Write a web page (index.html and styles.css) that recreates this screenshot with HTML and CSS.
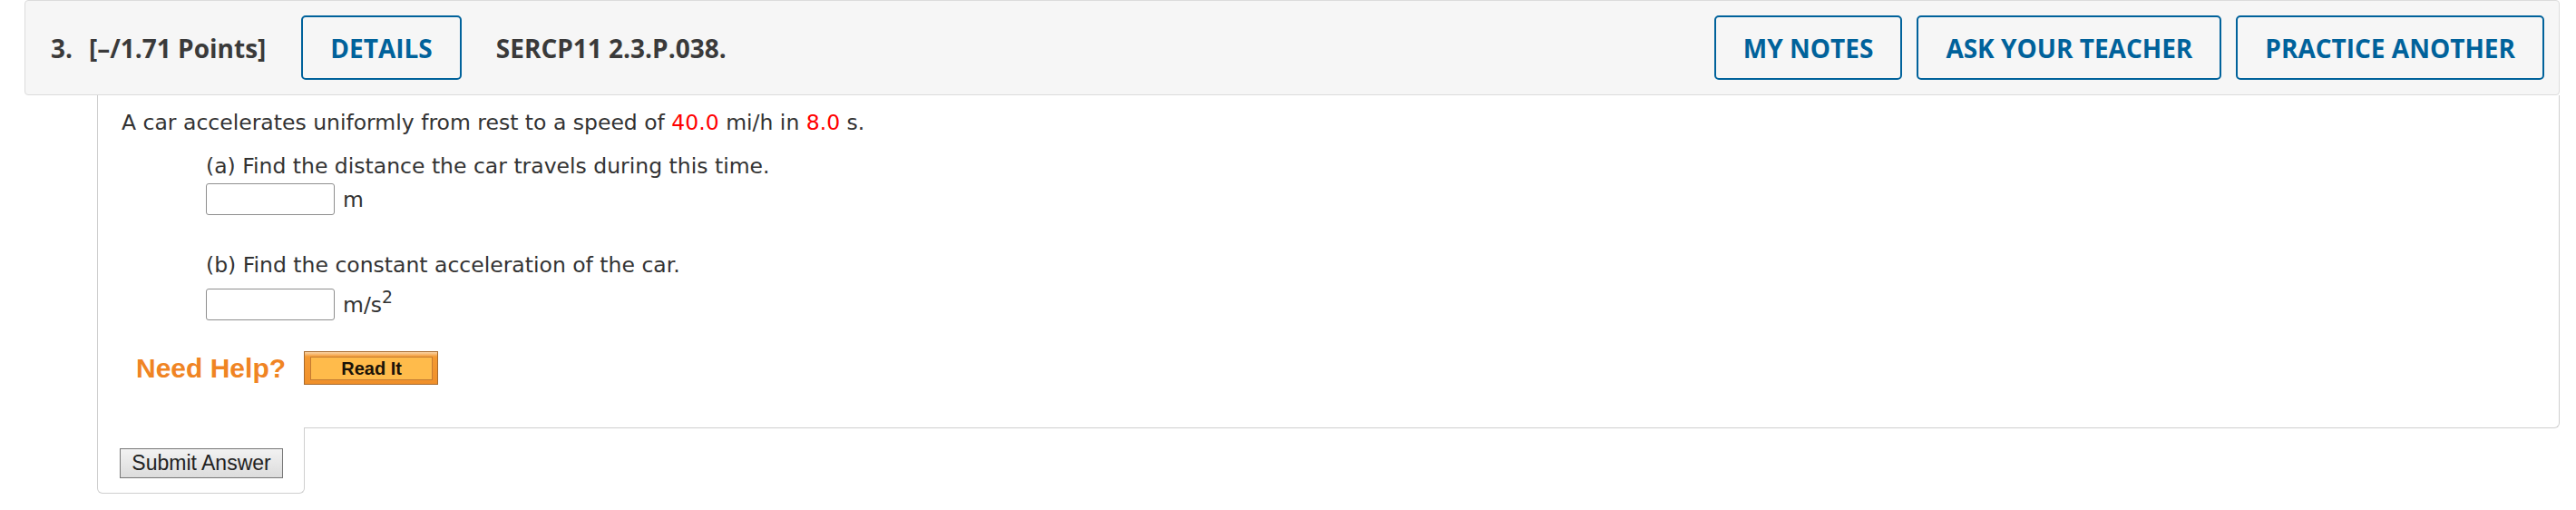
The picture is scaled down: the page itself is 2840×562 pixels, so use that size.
FILE: index.html
```html
<!DOCTYPE html>
<html lang="en">
<head>
<meta charset="utf-8">
<title>Question 3</title>
<link rel="stylesheet" href="styles.css">
</head>
<body>
<div class="question">
  <div class="qhead">
    <div class="qhead-left">
      <span class="qnum">3.</span>
      <span class="qpoints">[–/1.71 Points]</span>
      <button class="hbtn" type="button">DETAILS</button>
      <span class="qcode">SERCP11 2.3.P.038.</span>
    </div>
    <div class="qhead-right">
      <button class="hbtn" type="button">MY NOTES</button>
      <button class="hbtn" type="button">ASK YOUR TEACHER</button>
      <button class="hbtn" type="button">PRACTICE ANOTHER</button>
    </div>
  </div>
  <div class="qbody">
    <p class="stem">A car accelerates uniformly from rest to a speed of <span class="val">40.0</span> mi/h in <span class="val">8.0</span> s.</p>
    <div class="part part-a">
      <p class="prompt">(a) Find the distance the car travels during this time.</p>
      <div class="answer"><input class="ans" type="text"><span class="unit">m</span></div>
    </div>
    <div class="part part-b">
      <p class="prompt">(b) Find the constant acceleration of the car.</p>
      <div class="answer"><input class="ans" type="text"><span class="unit">m/s<sup>2</sup></span></div>
    </div>
    <div class="help">
      <span class="need">Need Help?</span>
      <span class="readit"><span class="readit-inner">Read It</span></span>
    </div>
  </div>
  <div class="qsubmit">
    <button class="submit" type="button">Submit Answer</button>
  </div>
</div>
</body>
</html>
```

FILE: styles.css
```css
html, body {
  margin: 0;
  padding: 0;
  background: #ffffff;
}

.question {
  margin-left: 27px;
  width: 2795px;
}

.qhead {
  box-sizing: border-box;
  height: 105px;
  background: #f6f6f6;
  border: 1px solid #dcdcdc;
  border-radius: 4px;
  padding: 16px 16px 16px 28px;
  display: flex;
  justify-content: space-between;
  align-items: center;
  font-family: "Open Sans", "Liberation Sans", sans-serif;
}

.qhead-left, .qhead-right {
  display: flex;
  align-items: center;
}

.qhead-right {
  gap: 16px;
}

.qnum, .qpoints, .qcode {
  font-weight: 700;
  font-size: 28px;
  color: #3a3a3a;
}

.qpoints {
  margin-left: 18px;
  margin-right: 39px;
}

.qcode {
  margin-left: 38px;
}

.hbtn {
  box-sizing: border-box;
  height: 71px;
  padding: 0 30px;
  border: 2px solid #00629b;
  border-radius: 5px;
  background: transparent;
  color: #00629b;
  font-family: "Open Sans", "Liberation Sans", sans-serif;
  font-weight: 700;
  font-size: 28px;
  line-height: 1;
}

.qbody {
  box-sizing: border-box;
  margin-left: 80px;
  height: 367px;
  border: 1px solid #cfcfcf;
  border-top: none;
  border-bottom-right-radius: 6px;
  padding: 14px 26px 0 26px;
  font-family: Verdana, "DejaVu Sans", sans-serif;
  font-size: 23.5px;
  color: #333333;
}

.qbody p {
  margin: 0;
  line-height: 32px;
}

.val {
  color: #ff0000;
}

.part {
  margin-left: 93px;
}

.part-a {
  margin-top: 16px;
}

.part-b {
  margin-top: 39px;
}

.part-a .answer {
  margin-top: 3px;
}

.part-b .answer {
  margin-top: 10px;
}

.answer {
  display: flex;
  align-items: center;
  line-height: 32px;
}

.ans {
  box-sizing: border-box;
  width: 142px;
  height: 35px;
  margin: 0;
  border: 1px solid #8f8f8f;
  border-radius: 3px;
  background: #ffffff;
}

.unit {
  margin-left: 9px;
}

.unit sup {
  font-size: 0.8em;
  line-height: 0;
  vertical-align: 0.55em;
}

.help {
  display: flex;
  align-items: center;
  margin-top: 34px;
  margin-left: 16px;
  gap: 20px;
}

.need {
  font-family: "Liberation Sans", Arial, sans-serif;
  font-weight: 700;
  font-size: 30px;
  color: #f08423;
}

.readit {
  box-sizing: border-box;
  width: 148px;
  height: 37px;
  padding: 5px 5px 4px 6px;
  border: 1px solid #a86a2c;
  background: linear-gradient(#fbd6a8 0, #f49a33 5px, #f0902a 100%);
  display: flex;
}

.readit-inner {
  flex: 1;
  display: flex;
  align-items: center;
  justify-content: center;
  border: 1px solid #c47b33;
  background: #ffbb4b;
  font-family: "Liberation Sans", Arial, sans-serif;
  font-weight: 700;
  font-size: 20px;
  color: #1a1208;
}

.qsubmit {
  position: relative;
  box-sizing: border-box;
  margin-left: 80px;
  margin-top: -1px;
  width: 229px;
  height: 73px;
  background: #ffffff;
  border: 1px solid #cfcfcf;
  border-top: none;
  border-radius: 0 0 6px 6px;
  padding: 23px 0 0 24px;
}

.submit {
  box-sizing: border-box;
  width: 180px;
  height: 33px;
  margin: 0;
  padding: 0;
  border: 1px solid #777777;
  border-radius: 0;
  background: linear-gradient(#f2f2f2, #dcdcdc);
  font-family: "Liberation Sans", Arial, sans-serif;
  font-size: 23px;
  color: #222222;
}
```
